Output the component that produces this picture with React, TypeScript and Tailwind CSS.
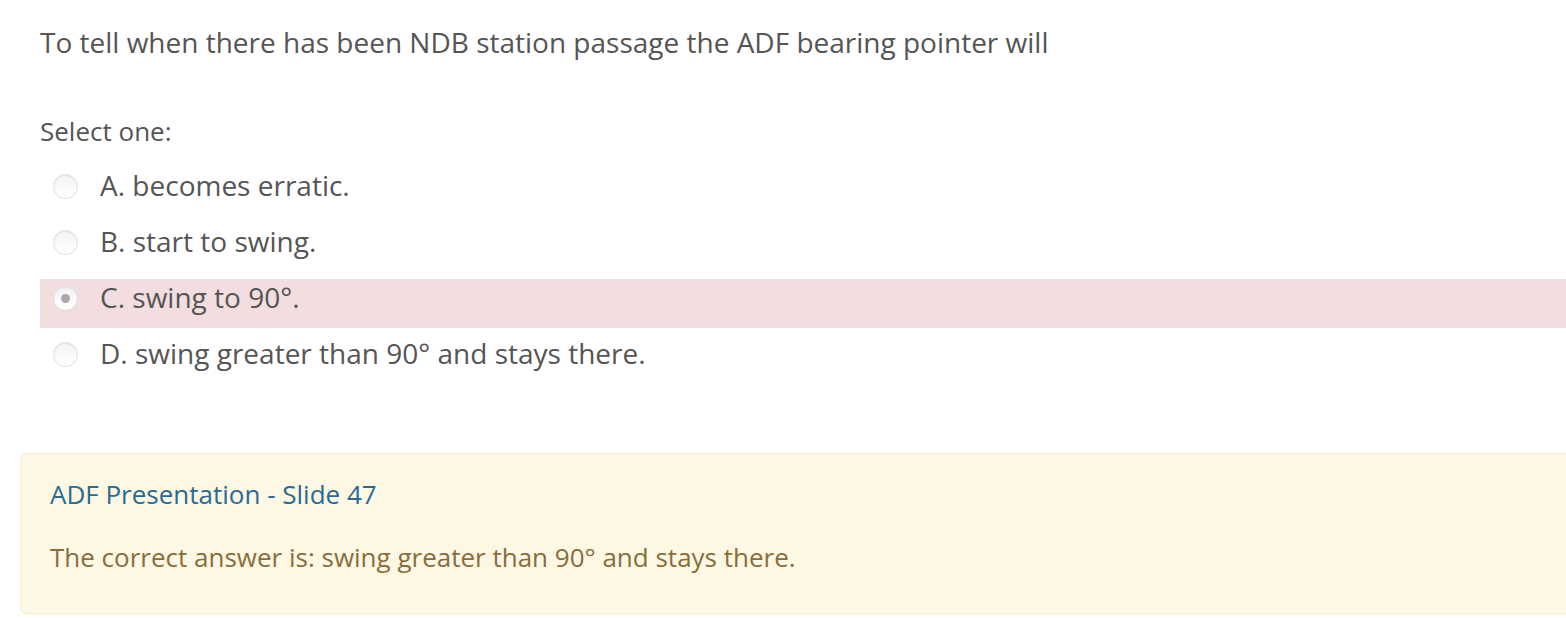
const options = [
  { letter: 'A', text: 'becomes erratic.' },
  { letter: 'B', text: 'start to swing.' },
  { letter: 'C', text: 'swing to 90°.', checked: true },
  { letter: 'D', text: 'swing greater than 90° and stays there.' },
];

function Radio({ checked }: { checked?: boolean }) {
  return (
    <span className="flex h-[25px] w-[25px] shrink-0 items-center justify-center rounded-full border border-[#dedede] bg-gradient-to-b from-[#f3f3f3] to-white shadow-[inset_0_1px_1px_rgba(0,0,0,0.05)]">
      {checked && <span className="h-[9px] w-[9px] rounded-full bg-[#a9a9a9]" />}
    </span>
  );
}

export default function App() {
  return (
    <div className="w-[1566px] h-[618px] overflow-hidden bg-white font-['Open_Sans',sans-serif] text-[#555]">
      <div className="w-[1620px] pt-[24px]">
        <div className="pl-[40px]">
          <p className="text-[28px] leading-[36px]">
            To tell when there has been NDB station passage the ADF bearing pointer will
          </p>
          <p className="mt-[53px] text-[26px] leading-[36px]">Select one:</p>
          <div className="mt-[18px] flex flex-col gap-[7px]">
            {options.map((o) => (
              <div
                key={o.letter}
                className={`flex h-[49px] items-start pl-[13px] ${o.checked ? 'bg-[#f2dede]' : ''}`}
              >
                <div className="flex h-[38px] items-center">
                  <Radio checked={o.checked} />
                </div>
                <span className="ml-[22px] text-[28px] leading-[36px]">
                  {o.letter}. {o.text}
                </span>
              </div>
            ))}
          </div>
        </div>
        <div className="ml-[20px] mt-[69px] rounded-[6px] border border-[#faebcc] bg-[#fcf8e3] pl-[29px] pt-[22px] pb-[38px]">
          <a className="block text-[26px] leading-[36px] text-[#2b6a93]" href="#">
            ADF Presentation - Slide 47
          </a>
          <p className="mt-[27px] text-[26px] leading-[36px] text-[#8a6d3b]">
            The correct answer is: swing greater than 90° and stays there.
          </p>
        </div>
      </div>
    </div>
  );
}
